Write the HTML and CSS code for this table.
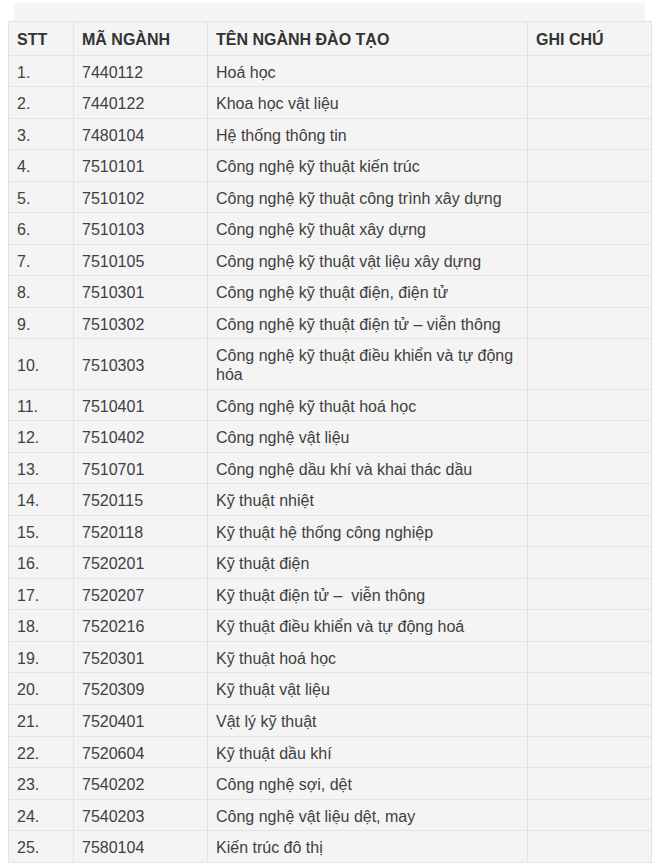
FILE: index.html
```html
<!DOCTYPE html>
<html lang="vi">
<head>
<meta charset="utf-8">
<title>Danh sách ngành đào tạo</title>
<link rel="stylesheet" href="styles.css">
</head>
<body>
<div class="page">
  <div class="strip"></div>
  <table class="majors">
    <colgroup>
      <col class="c-stt"><col class="c-code"><col class="c-name"><col class="c-note">
    </colgroup>
    <thead>
      <tr><th>STT</th><th>MÃ NGÀNH</th><th>TÊN NGÀNH ĐÀO TẠO</th><th>GHI CHÚ</th></tr>
    </thead>
    <tbody>
      <tr><td>1.</td><td>7440112</td><td>Hoá học</td><td></td></tr>
      <tr><td>2.</td><td>7440122</td><td>Khoa học vật liệu</td><td></td></tr>
      <tr><td>3.</td><td>7480104</td><td>Hệ thống thông tin</td><td></td></tr>
      <tr><td>4.</td><td>7510101</td><td>Công nghệ kỹ thuật kiến trúc</td><td></td></tr>
      <tr><td>5.</td><td>7510102</td><td>Công nghệ kỹ thuật công trình xây dựng</td><td></td></tr>
      <tr><td>6.</td><td>7510103</td><td>Công nghệ kỹ thuật xây dựng</td><td></td></tr>
      <tr><td>7.</td><td>7510105</td><td>Công nghệ kỹ thuật vật liệu xây dựng</td><td></td></tr>
      <tr><td>8.</td><td>7510301</td><td>Công nghệ kỹ thuật điện, điện tử</td><td></td></tr>
      <tr><td>9.</td><td>7510302</td><td>Công nghệ kỹ thuật điện tử – viễn thông</td><td></td></tr>
      <tr><td>10.</td><td>7510303</td><td>Công nghệ kỹ thuật điều khiển và tự động hóa</td><td></td></tr>
      <tr><td>11.</td><td>7510401</td><td>Công nghệ kỹ thuật hoá học</td><td></td></tr>
      <tr><td>12.</td><td>7510402</td><td>Công nghệ vật liệu</td><td></td></tr>
      <tr><td>13.</td><td>7510701</td><td>Công nghệ dầu khí và khai thác dầu</td><td></td></tr>
      <tr><td>14.</td><td>7520115</td><td>Kỹ thuật nhiệt</td><td></td></tr>
      <tr><td>15.</td><td>7520118</td><td>Kỹ thuật hệ thống công nghiệp</td><td></td></tr>
      <tr><td>16.</td><td>7520201</td><td>Kỹ thuật điện</td><td></td></tr>
      <tr><td>17.</td><td>7520207</td><td>Kỹ thuật điện tử –&nbsp; viễn thông</td><td></td></tr>
      <tr><td>18.</td><td>7520216</td><td>Kỹ thuật điều khiển và tự động hoá</td><td></td></tr>
      <tr><td>19.</td><td>7520301</td><td>Kỹ thuật hoá học</td><td></td></tr>
      <tr><td>20.</td><td>7520309</td><td>Kỹ thuật vật liệu</td><td></td></tr>
      <tr><td>21.</td><td>7520401</td><td>Vật lý kỹ thuật</td><td></td></tr>
      <tr><td>22.</td><td>7520604</td><td>Kỹ thuật dầu khí</td><td></td></tr>
      <tr><td>23.</td><td>7540202</td><td>Công nghệ sợi, dệt</td><td></td></tr>
      <tr><td>24.</td><td>7540203</td><td>Công nghệ vật liệu dệt, may</td><td></td></tr>
      <tr><td>25.</td><td>7580104</td><td>Kiến trúc đô thị</td><td></td></tr>
    </tbody>
  </table>
</div>
</body>
</html>
```
FILE: styles.css
```css
html, body {
  margin: 0;
  padding: 0;
  background: #ffffff;
}
.page {
  padding: 3px 9px 0 8px;
  font-family: "Liberation Sans", Arial, sans-serif;
  color: #404040;
}
.strip {
  height: 18px;
  margin: 0 6px 0 6px;
  background: #f5f5f5;
}
.majors {
  width: 643px;
  border-collapse: collapse;
  table-layout: fixed;
  background: #f4f4f4;
  font-size: 16px;
  line-height: 18.55px;
}
.c-stt { width: 65px; }
.c-code { width: 134px; }
.c-name { width: 320px; }
.c-note { width: 124px; }
.majors th,
.majors td {
  border: 1px solid #e3e3e3;
  padding: 8px 8px 4px 8px;
  text-align: left;
  vertical-align: middle;
}
.majors th {
  font-weight: bold;
  color: #333333;
  padding-top: 9px;
  padding-bottom: 5px;
}
```
